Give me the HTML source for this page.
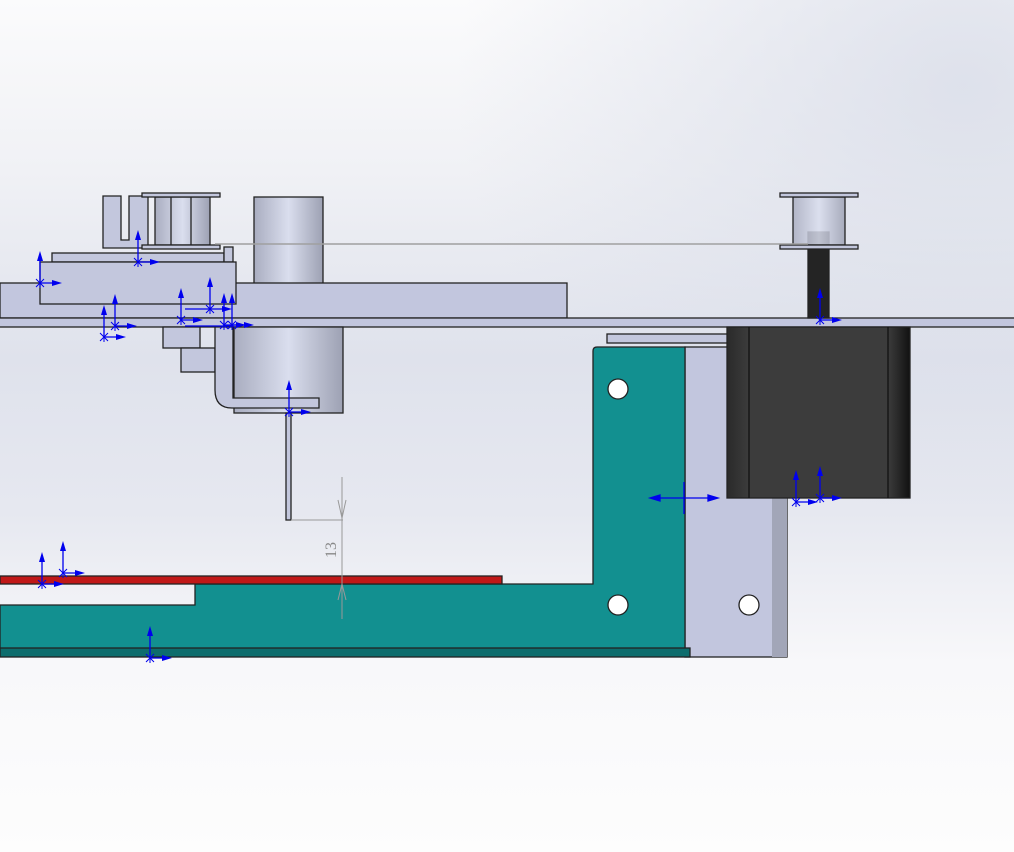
<!DOCTYPE html>
<html><head><meta charset="utf-8"><style>html,body{margin:0;padding:0;width:1014px;height:852px;overflow:hidden}svg{display:block}</style></head>
<body>
<svg width="1014" height="852" viewBox="0 0 1014 852" xmlns="http://www.w3.org/2000/svg">
<defs>
<linearGradient id="bg" x1="0" y1="0" x2="0" y2="1">
<stop offset="0" stop-color="#fbfbfc"/><stop offset="0.2" stop-color="#f0f1f5"/><stop offset="0.42" stop-color="#dfe2ec"/><stop offset="0.6" stop-color="#e6e8f0"/><stop offset="0.78" stop-color="#f8f8fa"/><stop offset="1" stop-color="#fdfdfd"/>
</linearGradient>
<radialGradient id="tr" cx="0.95" cy="0.1" r="0.5"><stop offset="0" stop-color="#d8dce8" stop-opacity="0.8"/><stop offset="1" stop-color="#d8dce8" stop-opacity="0"/></radialGradient>
<linearGradient id="cyl" x1="0" x2="1"><stop offset="0" stop-color="#a9adc0"/><stop offset="0.5" stop-color="#dadeee"/><stop offset="1" stop-color="#9da1b3"/></linearGradient>
<linearGradient id="mot" x1="0" x2="1"><stop offset="0" stop-color="#2a2a2a"/><stop offset="0.12" stop-color="#3c3c3c"/><stop offset="0.88" stop-color="#3c3c3c"/><stop offset="1" stop-color="#111"/></linearGradient>
<g id="ax"><line x1="0" y1="0" x2="0" y2="-28" stroke="#0000ee" stroke-width="1.3"/><path d="M-3,-22 L0,-32 L3,-22Z" fill="#0000ee"/><line x1="0" y1="0" x2="18" y2="0" stroke="#0000ee" stroke-width="1.3"/><path d="M12,-3 L22,0 L12,3Z" fill="#0000ee"/><path d="M-4,-4 L4,4 M-4,4 L4,-4 M0,-5 L0,5" stroke="#0000ee" stroke-width="1"/></g>
</defs>
<rect width="1014" height="852" fill="url(#bg)"/>
<rect width="1014" height="852" fill="url(#tr)"/>
<g stroke="#222" stroke-width="1.3">
<!-- cylinder upper -->
<rect x="254" y="197" width="69" height="90" fill="url(#cyl)"/>
<!-- clip -->
<path d="M103,196 H121 V240 H129 V196 H148 V248 H103Z" fill="#c3c7dd"/>
<!-- left pulley -->
<rect x="155" y="197" width="55" height="48" fill="url(#cyl)"/>
<line x1="171" y1="197" x2="171" y2="245"/><line x1="191" y1="197" x2="191" y2="245"/>
<rect x="142" y="193" width="78" height="4" fill="#c3c7dd"/>
<rect x="142" y="245" width="78" height="4" fill="#c3c7dd"/>
<!-- lip and block -->
<rect x="52" y="253" width="172" height="9" fill="#c3c7dd"/>
<rect x="224" y="247" width="9" height="15" fill="#c3c7dd"/>
<rect x="0" y="283" width="567" height="35" fill="#c2c6de"/>
<rect x="40" y="262" width="196" height="42" fill="#c3c7dd"/>
<!-- top plate -->
<rect x="-2" y="318" width="1020" height="9" fill="#c2c6de"/>
<!-- lower cylinder -->
<rect x="234" y="327" width="109" height="86" fill="url(#cyl)"/>
<rect x="163" y="327" width="37" height="21" fill="#c3c7dd"/>
<rect x="181" y="348" width="34" height="24" fill="#c3c7dd"/>
<path d="M215,327 H233 V398 H319 V408 H232 Q215,408 215,390Z" fill="#c3c7dd"/>
<!-- rod -->
<rect x="286" y="413" width="5" height="107" fill="#c3c7dd"/>
<!-- gray bracket -->
<rect x="607" y="334" width="122" height="9" fill="#c3c7dd"/>
<rect x="685" y="347" width="102" height="310" fill="#c2c6de"/>
<rect x="772" y="498" width="15" height="159" fill="#a2a6b8" stroke="none"/>
<!-- teal -->
<path d="M597,347 H685 V650 H0 V605 H195 V584 H593 V351 Q593,347 597,347Z" fill="#129090"/>
<rect x="0" y="648" width="690" height="9" fill="#0d6d6d"/>
<rect x="0" y="576" width="502" height="8" fill="#c01818"/>
<!-- motor -->
<rect x="727" y="327" width="183" height="171" fill="url(#mot)"/>
<line x1="749" y1="327" x2="749" y2="498" stroke="#111"/><line x1="888" y1="327" x2="888" y2="498" stroke="#111"/>
<!-- shaft & right pulley -->
<rect x="808" y="232" width="21" height="86" fill="#242424"/>
<rect x="793" y="197" width="52" height="48" fill="url(#cyl)" fill-opacity="0.85"/>
<rect x="780" y="193" width="78" height="4" fill="#c3c7dd"/>
<rect x="780" y="245" width="78" height="4" fill="#c3c7dd"/>
<!-- holes -->
<circle cx="618" cy="389" r="10" fill="#fff"/>
<circle cx="618" cy="605" r="10" fill="#fff"/>
<circle cx="749" cy="605" r="10" fill="#fff"/>
</g>
<line x1="215" y1="244" x2="808" y2="244" stroke="#a0a0a0" stroke-width="1.5"/>
<!-- dimension -->
<g stroke="#999" stroke-width="1" fill="none">
<line x1="291" y1="520" x2="343" y2="520"/><line x1="342" y1="477" x2="342" y2="619"/>
<path d="M338,500 L342,518 L346,500 M338,600 L342,584 L346,600"/>
</g>
<text transform="translate(336,558) rotate(-90)" font-family="Liberation Serif,serif" font-size="16" fill="#888">13</text>
<!-- axes -->
<use href="#ax" x="40" y="283"/><use href="#ax" x="138" y="262"/>
<use href="#ax" x="104" y="337"/><use href="#ax" x="115" y="326"/>
<use href="#ax" x="181" y="320"/><use href="#ax" x="210" y="309"/>
<use href="#ax" x="224" y="325"/><use href="#ax" x="232" y="325"/>
<use href="#ax" x="289" y="412"/><use href="#ax" x="820" y="320"/>
<use href="#ax" x="796" y="502"/><use href="#ax" x="820" y="498"/>
<use href="#ax" x="42" y="584"/><use href="#ax" x="63" y="573"/>
<use href="#ax" x="150" y="658"/>
<g stroke="#0000ee" stroke-width="1.3" fill="#0000ee">
<line x1="652" y1="498" x2="716" y2="498"/><line x1="684" y1="482" x2="684" y2="514"/>
<path d="M660,495 L650,498 L660,501Z M708,495 L718,498 L708,501Z"/>
<line x1="185" y1="309" x2="210" y2="309"/><line x1="185" y1="326" x2="232" y2="326"/>
</g>
</svg>
</body></html>
